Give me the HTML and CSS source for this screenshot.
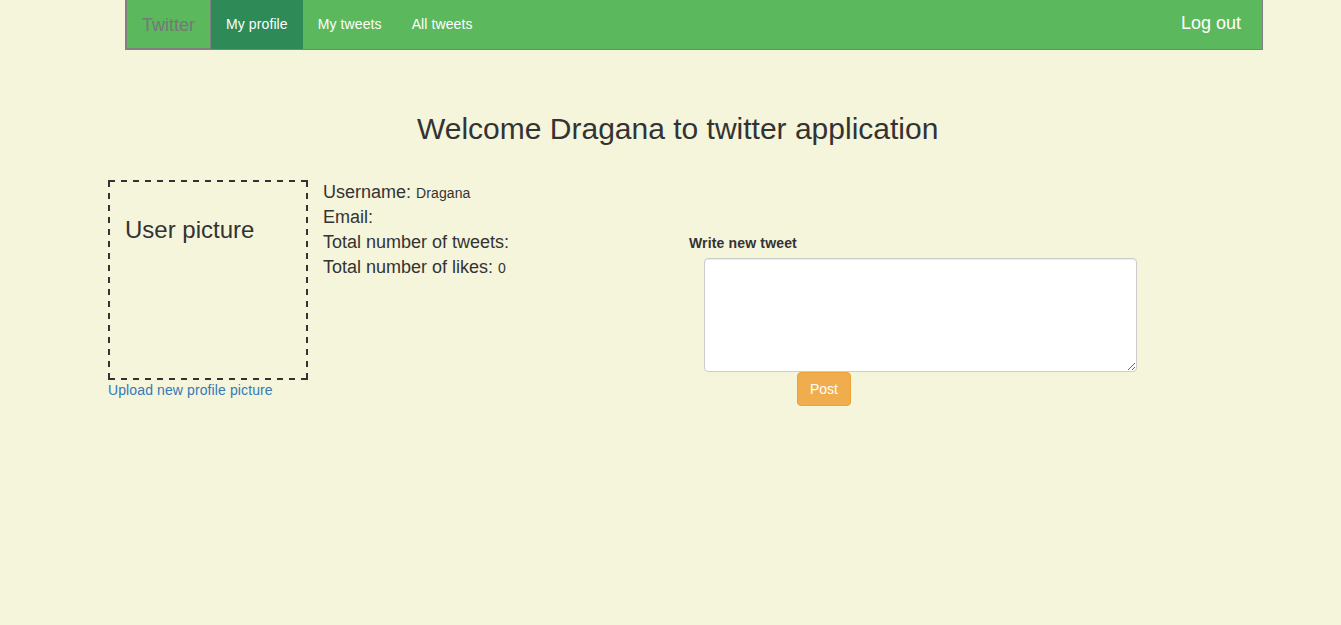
FILE: index.html
```html
<!DOCTYPE html>
<html lang="en">
<head>
<meta charset="utf-8">
<title>Twitter</title>
<link rel="stylesheet" href="styles.css">
</head>
<body>
<nav class="navbar">
  <a class="brand">Twitter</a>
  <a class="nav-link active">My profile</a>
  <a class="nav-link">My tweets</a>
  <a class="nav-link">All tweets</a>
  <a class="logout">Log out</a>
</nav>
<h2 class="welcome">Welcome Dragana to twitter application</h2>
<main class="profile">
  <section class="picture-column">
    <div class="picture"><h3 class="picture-title">User picture</h3></div>
    <a class="upload">Upload new profile picture</a>
  </section>
  <section class="details">
    <div>Username: <span class="value">Dragana</span></div>
    <div>Email:</div>
    <div>Total number of tweets:</div>
    <div>Total number of likes: <span class="value">0</span></div>
  </section>
  <form class="tweet-form">
    <label class="tweet-label" for="tweet">Write new tweet</label>
    <textarea class="tweet-input" id="tweet"></textarea>
    <button class="post" type="button">Post</button>
  </form>
</main>
</body>
</html>
```
FILE: styles.css
```css
* { box-sizing: border-box; }
body {
  margin: 0;
  background: #f5f5dc;
  color: #333;
  font: 14px/20px "Liberation Sans", Arial, sans-serif;
}
.navbar {
  display: flex;
  width: 1138px;
  height: 50px;
  margin-left: 125px;
  background: #5cb85c;
  border: 1px solid #808080;
  border-top: 0;
}
.brand {
  height: 49px;
  padding: 15px;
  border: 1px solid #808080;
  border-top: 0;
  color: #777;
  font-size: 18px;
}
.nav-link {
  padding: 14px 15px 15px;
  color: #fff;
  letter-spacing: .1px;
}
.nav-link.active { background: #2e8b57; }
.logout {
  margin-left: auto;
  padding: 13px 21px 0 0;
  color: #fff;
  font-size: 18px;
}
.welcome {
  margin: 62px 0 0 417px;
  font-size: 30px;
  font-weight: 500;
  line-height: 33px;
}
.profile {
  display: flex;
  margin: 35px 0 0 108px;
}
.picture-column { width: 200px; }
/* Dashed frame: 6px dashes with 6px gaps and solid corners */
.picture {
  --dash-x: linear-gradient(90deg, #333 6px, transparent 6px);
  --dash-y: linear-gradient(#333 6px, transparent 6px);
  --corner: linear-gradient(#333, #333);
  height: 200px;
  padding: 37px 17px 0;
  background:
    var(--dash-x) 1px 0 / 12px 2px repeat-x,
    var(--dash-x) 1px 100% / 12px 2px repeat-x,
    var(--dash-y) 0 1px / 2px 12px repeat-y,
    var(--dash-y) 100% 1px / 2px 12px repeat-y,
    var(--corner) 0 0 / 2px 2px no-repeat,
    var(--corner) 100% 0 / 2px 2px no-repeat,
    var(--corner) 0 100% / 2px 2px no-repeat,
    var(--corner) 100% 100% / 2px 2px no-repeat;
}
.picture-title {
  margin: 0;
  font-size: 24px;
  font-weight: 500;
  line-height: 26px;
}
.upload {
  color: #337ab7;
  letter-spacing: .11px;
}
.details {
  width: 366px;
  padding-left: 15px;
  font-size: 18px;
  line-height: 25px;
}
.value {
  font-size: 14px;
  line-height: 1;
  letter-spacing: .1px;
}
.tweet-form {
  display: flex;
  flex-direction: column;
  align-items: flex-start;
  padding: 53px 0 0 15px;
}
.tweet-label {
  margin-bottom: 5px;
  font-weight: 700;
  letter-spacing: .16px;
}
.tweet-input {
  width: 433px;
  height: 114px;
  margin: 0 0 0 15px;
  padding: 6px 12px;
  background: #fff;
  border: 1px solid #ccc;
  border-radius: 4px;
  box-shadow: inset 0 1px 1px rgba(0, 0, 0, .075);
  font: inherit;
}
.post {
  margin: 0 0 0 108px;
  padding: 6px 12px;
  background: #f0ad4e;
  border: 1px solid #eea236;
  border-radius: 4px;
  color: #fff;
  font: inherit;
}
```
